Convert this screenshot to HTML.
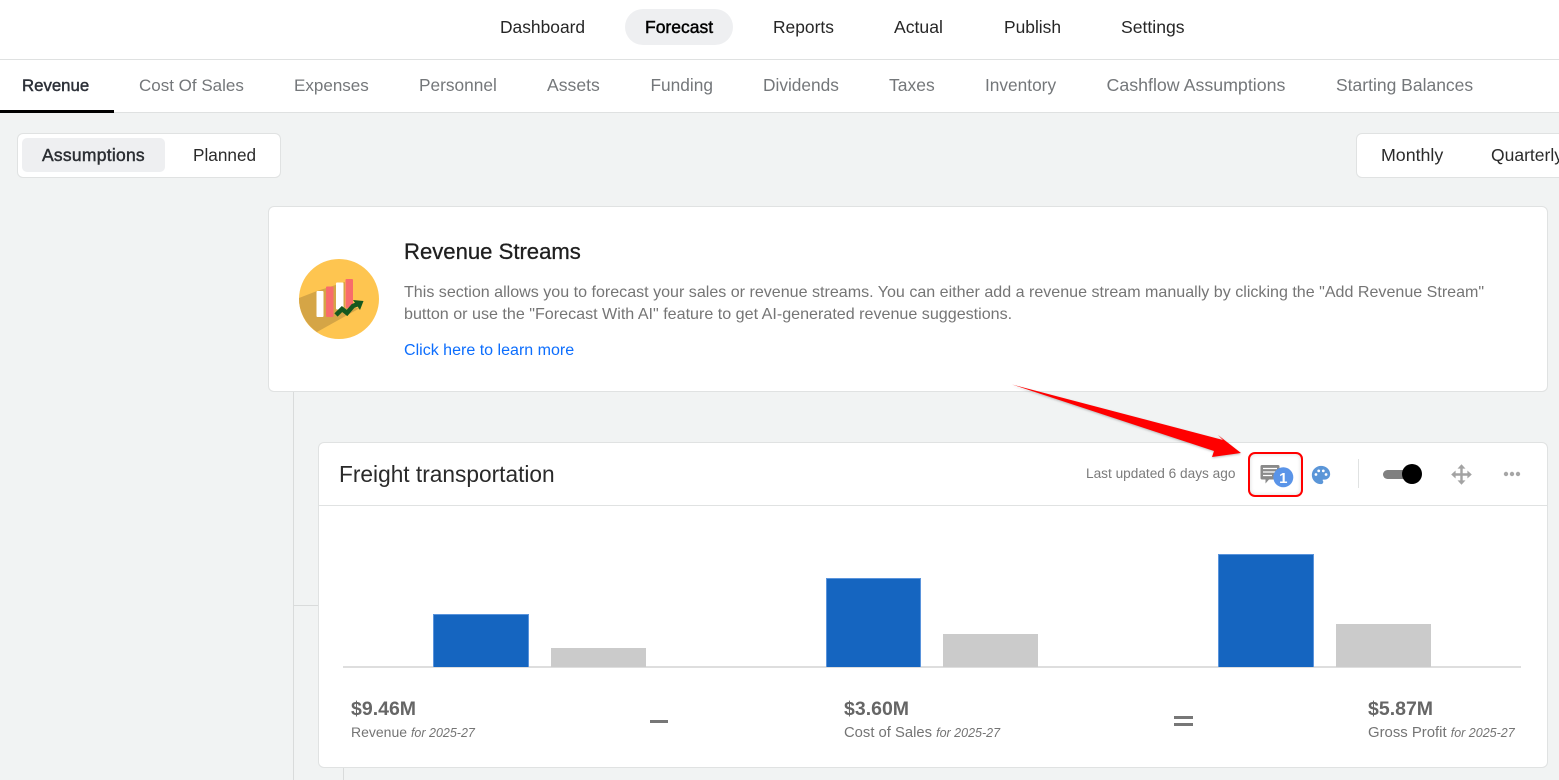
<!DOCTYPE html>
<html lang="en"><head><meta charset="utf-8"><title>Forecast</title>
<style>
html,body{margin:0;padding:0}
body{width:1559px;height:780px;overflow:hidden;background:#f1f3f3;position:relative;font-family:"Liberation Sans",Arial,sans-serif}
.a{position:absolute}
.t{position:absolute;white-space:nowrap;line-height:20px}
.nav{font-size:17.4px;color:#262626;top:17px}
.tab{font-size:17.2px;color:#74777a;top:75px}
.box{position:absolute;background:#fff;border:1px solid #e0e2e2;box-sizing:border-box;border-radius:6px}
.amt{font-size:19.5px;font-weight:700;color:#666;top:699px}
.lbl{font-size:14.7px;color:#747474;top:723px}
.lbl i{font-size:12.5px}
</style></head><body>
<div class="a" style="left:0;top:0;width:1559px;height:60px;background:#fff;border-bottom:1px solid #dfe1e1;box-sizing:border-box"></div>
<div class="a" style="left:625px;top:9px;width:108px;height:36px;border-radius:18px;background:#eeeff1"></div>
<span class="t nav" style="left:500px">Dashboard</span>
<span class="t nav" style="left:645px;color:#000;font-size:17.5px;-webkit-text-stroke:.45px #000">Forecast</span>
<span class="t nav" style="left:773px">Reports</span>
<span class="t nav" style="left:894px;font-size:17.6px">Actual</span>
<span class="t nav" style="left:1004px">Publish</span>
<span class="t nav" style="left:1121px;font-size:17.6px">Settings</span>

<div class="a" style="left:0;top:60px;width:1559px;height:53px;background:#fff;border-bottom:1px solid #dfe1e1;box-sizing:border-box"></div>
<div class="a" style="left:0;top:110px;width:114px;height:3px;background:#000"></div>
<span class="t tab" style="left:22px;top:76px;color:#2c3038;font-size:16.8px;-webkit-text-stroke:.45px #2c3038">Revenue</span>
<span class="t tab" style="left:139px;top:76px;font-size:17px">Cost Of Sales</span>
<span class="t tab" style="left:294px;top:76px;font-size:17.05px">Expenses</span>
<span class="t tab" style="left:419px;font-size:17.3px">Personnel</span>
<span class="t tab" style="left:547px;font-size:17.6px">Assets</span>
<span class="t tab" style="left:650.5px;font-size:17.3px">Funding</span>
<span class="t tab" style="left:763px;font-size:17.3px">Dividends</span>
<span class="t tab" style="left:889px;font-size:17.5px">Taxes</span>
<span class="t tab" style="left:985px;font-size:17.3px">Inventory</span>
<span class="t tab" style="left:1106.5px;font-size:17.8px">Cashflow Assumptions</span>
<span class="t tab" style="left:1336px;font-size:17.5px">Starting Balances</span>

<div class="box" style="left:17px;top:133px;width:264px;height:45px"></div>
<div class="a" style="left:22px;top:138px;width:143px;height:34px;border-radius:5px;background:#eeeff1"></div>
<span class="t" style="left:42px;top:145px;font-size:17.5px;letter-spacing:.25px;color:#2b2e33;-webkit-text-stroke:.45px #2b2e33">Assumptions</span>
<span class="t" style="left:193px;top:145px;font-size:17.2px;color:#2b2b2b">Planned</span>

<div class="box" style="left:1356px;top:133px;width:220px;height:45px"></div>
<span class="t" style="left:1381px;top:145px;font-size:17.8px;color:#2b2b2b">Monthly</span>
<span class="t" style="left:1491px;top:145px;font-size:17.5px;color:#2b2b2b">Quarterly</span>

<div class="a" style="left:293px;top:392px;width:1px;height:388px;background:#d9dbdb"></div>
<div class="a" style="left:293px;top:605px;width:26px;height:1px;background:#d9dbdb"></div>
<div class="a" style="left:343px;top:767px;width:1px;height:13px;background:#d9dbdb"></div>

<div class="box" style="left:268px;top:206px;width:1280px;height:186px"></div>
<svg class="a" style="left:298px;top:258px" width="82" height="82" viewBox="0 0 82 82">
<circle cx="41" cy="41" r="40" fill="#fec550"/>
<path d="M1 40 L19 33 L47 24 L47 50 L62 50 L19 74 A40 40 0 0 1 1 40Z" fill="#d5a546"/>
<rect x="18.500" y="33" width="7" height="26" rx="1" fill="#fff"/>
<rect x="28" y="28.500" width="7.500" height="30.500" rx="1" fill="#f86c6b"/>
<rect x="38" y="24.500" width="7.500" height="27" rx="1" fill="#fff"/>
<rect x="47.500" y="21" width="7.500" height="29" rx="1" fill="#f86c6b"/>
<path d="M38 57 L44 51 L49 55 L55 48 L60 46" fill="none" stroke="#14581f" stroke-width="4.500"/>
<path d="M55 42 L65.500 43 L62 52Z" fill="#14581f"/>
</svg>
<span class="t" style="left:404px;top:242px;font-size:22.1px;font-weight:400;color:#1f1f1f;-webkit-text-stroke:.3px #1f1f1f">Revenue Streams</span>
<span class="t" style="left:404px;top:282px;font-size:16.07px;color:#757575">This section allows you to forecast your sales or revenue streams. You can either add a revenue stream manually by clicking the "Add Revenue Stream"</span>
<span class="t" style="left:404px;top:304px;font-size:16.1px;color:#757575">button or use the "Forecast With AI" feature to get AI-generated revenue suggestions.</span>
<span class="t" style="left:404px;top:340px;font-size:16.05px;color:#0d6efd">Click here to learn more</span>

<div class="box" style="left:318px;top:442px;width:1230px;height:326px"></div>
<div class="a" style="left:319px;top:505px;width:1228px;height:1px;background:#e0e2e2"></div>
<span class="t" style="left:339px;top:464px;font-size:22.7px;color:#2a2a2a">Freight transportation</span>
<span class="t" style="left:1086px;top:464px;font-size:13.65px;color:#7b7b7b">Last updated 6 days ago</span>

<svg class="a" style="left:1255px;top:460px" width="42" height="30" viewBox="0 0 42 30">
<path d="M7 5h16a1.500 1.500 0 0 1 1.500 1.500V18a1.500 1.500 0 0 1-1.500 1.500H14l-3.500 4V19.500H7A1.500 1.500 0 0 1 5.500 18V6.500A1.500 1.500 0 0 1 7 5z" fill="#8a8a8a"/>
<path d="M8 8.500h14M8 12h14M8 15.500h9" stroke="#fff" stroke-width="1.300"/>
<circle cx="28.300" cy="17.300" r="10" fill="#5a94e8"/>
<text x="28.300" y="22.800" text-anchor="middle" font-family="Liberation Sans, sans-serif" font-size="15" font-weight="700" fill="#fff">1</text>
</svg>
<div class="a" style="left:1248px;top:452px;width:55px;height:45px;box-sizing:border-box;border:2px solid #f00;border-radius:7px;box-shadow:inset 0 0 4px rgba(0,0,0,.15)"></div>

<svg class="a" style="left:1310px;top:464px" width="22" height="22" viewBox="0 0 24 24"><path fill="#5b96d8" d="M12 2C6.490 2 2 6.490 2 12s4.490 10 10 10a2.500 2.500 0 0 0 2.500-2.500c0-.610-.230-1.200-.640-1.670a.528.528 0 0 1 .390-.830H16c3.310 0 6-2.690 6-6 0-4.960-4.490-9-10-9zm-5.500 11a1.500 1.500 0 1 1 0-3 1.500 1.500 0 0 1 0 3zm3-4a1.500 1.500 0 1 1 0-3 1.500 1.500 0 0 1 0 3zm5 0a1.500 1.500 0 1 1 0-3 1.500 1.500 0 0 1 0 3zm3 4a1.500 1.500 0 1 1 0-3 1.500 1.500 0 0 1 0 3z"/></svg>
<div class="a" style="left:1358px;top:459px;width:1px;height:29px;background:#e0e2e2"></div>
<div class="a" style="left:1383px;top:470px;width:30px;height:9px;border-radius:5px;background:#808080"></div>
<div class="a" style="left:1402px;top:464px;width:20px;height:20px;border-radius:50%;background:#000"></div>
<svg class="a" style="left:1451px;top:464px" width="21" height="21" viewBox="0 0 21 21"><path d="M10.500 3v15M3 10.500h15" stroke="#a3a3a3" stroke-width="2.400"/><path d="M10.500 .2l4 4.400h-8zM10.500 20.800l4-4.400h-8zM.2 10.500l4.400-4v8zM20.800 10.500l-4.400-4v8z" fill="#a3a3a3"/></svg>
<svg class="a" style="left:1503px;top:471px" width="18" height="6" viewBox="0 0 18 6"><circle cx="3" cy="3" r="2.200" fill="#a6a6a6"/><circle cx="9" cy="3" r="2.200" fill="#a6a6a6"/><circle cx="15" cy="3" r="2.200" fill="#a6a6a6"/></svg>

<svg class="a" style="left:1000px;top:375px" width="260" height="90" viewBox="0 0 260 90">
<path d="M12 9.500 L223 65 L218 60 L241 78 L212 82 L214 76Z" fill="#f00" style="filter:drop-shadow(0 1px 1px rgba(0,0,0,.25))"/>
</svg>

<div class="a" style="left:343px;top:666px;width:1178px;height:2px;background:#dedede"></div>
<div class="a" style="left:433px;top:614px;width:96px;height:53px;background:#1565c0;box-sizing:border-box;border:1px solid #5a94dc;border-bottom:0"></div>
<div class="a" style="left:551px;top:648px;width:95px;height:19px;background:#cbcbcb"></div>
<div class="a" style="left:826px;top:578px;width:95px;height:89px;background:#1565c0;box-sizing:border-box;border:1px solid #5a94dc;border-bottom:0"></div>
<div class="a" style="left:943px;top:634px;width:95px;height:33px;background:#cbcbcb"></div>
<div class="a" style="left:1218px;top:554px;width:96px;height:113px;background:#1565c0;box-sizing:border-box;border:1px solid #5a94dc;border-bottom:0"></div>
<div class="a" style="left:1336px;top:624px;width:95px;height:43px;background:#cbcbcb"></div>

<span class="t amt" style="left:351px">$9.46M</span>
<span class="t lbl" style="left:351px;top:722px;font-size:14px">Revenue <i>for 2025-27</i></span>
<div class="a" style="left:650px;top:720px;width:18px;height:3px;background:#777"></div>
<span class="t amt" style="left:844px">$3.60M</span>
<span class="t lbl" style="left:844px;font-size:14.8px">Cost of Sales <i>for 2025-27</i></span>
<div class="a" style="left:1174px;top:716px;width:19px;height:3px;background:#777"></div>
<div class="a" style="left:1174px;top:723px;width:19px;height:3px;background:#777"></div>
<span class="t amt" style="left:1368px">$5.87M</span>
<span class="t lbl" style="left:1368px;font-size:14.9px">Gross Profit <i>for 2025-27</i></span>
</body></html>
